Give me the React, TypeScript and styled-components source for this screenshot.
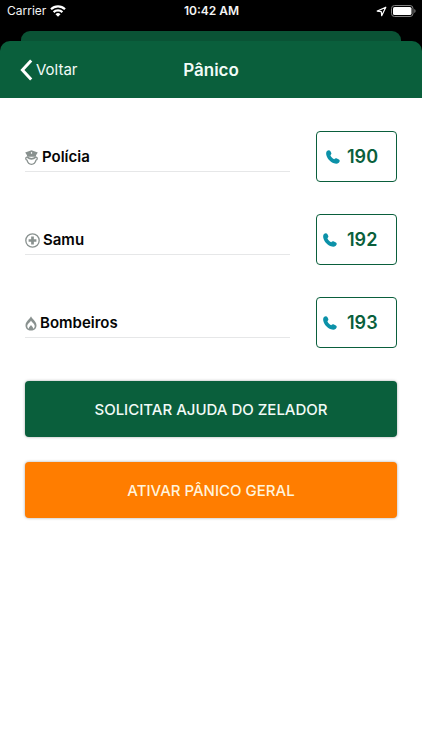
import React from 'react';
import styled, { createGlobalStyle } from 'styled-components';

const GREEN = '#0a5f3c';

const GlobalStyle = createGlobalStyle`
  * { box-sizing: border-box; }
  body {
    margin: 0;
    background: #fff;
    color: #050505;
    font-family: Inter, Roboto, "Liberation Sans", sans-serif;
  }
  button { font-family: inherit; cursor: pointer; }
`;

const Screen = styled.div`
  min-height: 100vh;
  background: #fff;
`;

const Top = styled.div`
  background: #000;
`;

const StatusBar = styled.div`
  display: grid;
  grid-template-columns: 1fr auto 1fr;
  align-items: center;
  height: 22px;
  padding: 0 6px 0 7px;
  color: #f4f4f4;
  font-size: 12px;
  line-height: 16px;
`;

const StatusGroup = styled.div<{ $end?: boolean }>`
  display: flex;
  align-items: center;
  gap: 4px;
  justify-content: ${({ $end }) => ($end ? 'flex-end' : 'flex-start')};
`;

const Clock = styled.time`
  font-weight: 600;
`;

const SheetBehind = styled.div`
  height: 10px;
  margin: 9px 21px 0;
  border-radius: 9px 9px 0 0;
  background: #0a5335;
`;

const Header = styled.header`
  display: grid;
  grid-template-columns: 1fr auto 1fr;
  align-items: center;
  height: 57px;
  padding: 0 20px;
  border-radius: 10px 10px 0 0;
  background: ${GREEN};
  color: #f2fbf7;
`;

const BackButton = styled.button`
  display: flex;
  align-items: center;
  justify-self: start;
  gap: 3px;
  padding: 0;
  border: 0;
  background: none;
  color: inherit;
  font-size: 15px;
  line-height: 24px;
`;

const Title = styled.h1`
  margin: 0;
  font-size: 17px;
  font-weight: 600;
  line-height: 24px;
`;

const Content = styled.main`
  padding: 33px 25px;
`;

const Contacts = styled.ul`
  display: flex;
  flex-direction: column;
  gap: 32px;
  margin: 0;
  padding: 0;
  list-style: none;
`;

const Contact = styled.li`
  display: flex;
  align-items: center;
  gap: 26px;
`;

const ContactName = styled.div<{ $gap: number }>`
  display: flex;
  flex: 1;
  align-items: center;
  gap: ${({ $gap }) => $gap}px;
  padding: 5px 0 3px;
  border-bottom: 1px solid #e6e7e8;
  font-size: 15px;
  font-weight: 600;
  line-height: 22px;
`;

const CallButton = styled.button<{ $wide?: boolean }>`
  display: flex;
  align-items: center;
  gap: ${({ $wide }) => ($wide ? 10 : 7)}px;
  width: 81px;
  height: 51px;
  padding: 0 0 0 ${({ $wide }) => ($wide ? 6 : 9)}px;
  border: 1px solid ${GREEN};
  border-radius: 4px;
  background: #fff;
  color: ${GREEN};
  font-size: 18px;
  font-weight: 600;
`;

const Actions = styled.div`
  display: flex;
  flex-direction: column;
  gap: 25px;
  margin-top: 33px;
`;

const ActionButton = styled.button<{ $color: string; $text: string }>`
  height: 56px;
  border: 0;
  border-radius: 4px;
  background: ${({ $color }) => $color};
  box-shadow: 0 0 3px rgba(0, 0, 0, 0.35);
  color: ${({ $text }) => $text};
  font-size: 15px;
  font-weight: 500;
`;

const WifiIcon = () => (
  <svg width="16" height="12" viewBox="0 0 16 12" fill="none" stroke="#fff" strokeWidth="2.2" aria-hidden="true">
    <path d="M1 4.3a10 10 0 0 1 14 0" />
    <path d="M3.6 7.1a6.3 6.3 0 0 1 8.8 0" />
    <path d="M8 11.7 5.5 9.2a3.5 3.5 0 0 1 5 0z" fill="#fff" stroke="none" />
  </svg>
);

const LocationIcon = () => (
  <svg width="11" height="11" viewBox="0 0 11 11" fill="none" stroke="#fff" strokeWidth="1.2" strokeLinejoin="round" aria-hidden="true">
    <path d="M9.8 1.2 1.2 5.1l4.1.6.4 4z" />
  </svg>
);

const BatteryIcon = () => (
  <svg width="25" height="12" viewBox="0 0 25 12" aria-hidden="true">
    <rect x=".5" y=".5" width="21.5" height="11" rx="3" fill="none" stroke="#828282" />
    <rect x="2" y="2" width="18.5" height="8" rx="1.6" fill="#fff" />
    <path d="M23.3 4a2.2 2.2 0 0 1 0 4z" fill="#828282" />
  </svg>
);

const ChevronIcon = () => (
  <svg width="13" height="22" viewBox="0 0 13 22" fill="none" stroke="#fff" strokeWidth="3" aria-hidden="true">
    <path d="M11.2 1.4 2.4 11l8.8 9.6" />
  </svg>
);

const PhoneIcon = () => (
  <svg width="14" height="14" viewBox="0 0 14 14" fill="#0b91a8" aria-hidden="true">
    <path d="M1 1.1C2.2-.2 3.7 0 4.3 1l.9 1.8c.5 1 .1 1.7-.8 2.5.6 1.6 2 3.1 3.8 4 .8-1 1.7-1.3 2.7-.8l2 1.1c1.1.7 1.1 2-.1 3.1-1.3 1.2-3 1.2-4.8.6C4.2 12 1.3 8.6.4 5.2-.1 3.4.1 2 1 1.1z" />
  </svg>
);

const PoliceIcon = () => (
  <svg width="13" height="15" viewBox="0 0 13 15" fill="none" stroke="#89918f" aria-hidden="true">
    <path d="M6.5.2 12.8 2.6 11 5.2v1.6H2V5.2L.2 2.6z" fill="#89918f" stroke="none" />
    <path d="m6.5 1.8.9 1.1-.9 1.2-.9-1.2z" fill="#fff" stroke="none" />
    <path d="M2 7.2C.3 7.2.4 9.800 2 10.200c.6 2.500 2.200 4.100 4.500 4.100s3.900-1.600 4.500-4.100c1.600-.4 1.700-3 0-3" strokeWidth="1.300" />
    <path d="M2.200 7.200c2.600 2 6 2 8.600 0" strokeWidth="1.600" />
  </svg>
);

const MedicalIcon = () => (
  <svg width="15" height="15" viewBox="0 0 15 15" fill="none" stroke="#89918f" aria-hidden="true">
    <circle cx="7.5" cy="7.5" r="6.7" strokeWidth="1.3" />
    <path d="M7.5 3.6v7.8M3.6 7.5h7.8" strokeWidth="2.7" />
  </svg>
);

const FlameIcon = () => (
  <svg width="12" height="15" viewBox="0 0 12 15" aria-hidden="true">
    <path
      fill="#89918f"
      fillRule="evenodd"
      d="M6 .3c.4 2.200 5.500 5 5.500 9.100 0 3-2.300 5.100-5.500 5.100S.5 12.400.5 9.400C.5 5.300 5.600 2.500 6 .3ZM6 4.600C5.400 6.400 2.300 7.600 2.300 10.200c0 1.100.6 2 1.600 2.500C3.800 11 5.100 10.300 6 9c.9 1.300 2.200 2 2.100 3.700 1-.5 1.600-1.400 1.600-2.500C9.700 7.600 6.600 6.400 6 4.600Z"
    />
  </svg>
);

const contacts = [
  { name: 'Polícia', phone: '190', icon: <PoliceIcon />, gap: 4, wide: false },
  { name: 'Samu', phone: '192', icon: <MedicalIcon />, gap: 3, wide: true },
  { name: 'Bombeiros', phone: '193', icon: <FlameIcon />, gap: 3, wide: true },
];

export default function App() {
  return (
    <Screen>
      <GlobalStyle />
      <Top>
        <StatusBar>
          <StatusGroup>
            <span>Carrier</span>
            <WifiIcon />
          </StatusGroup>
          <Clock>10:42 AM</Clock>
          <StatusGroup $end>
            <LocationIcon />
            <BatteryIcon />
          </StatusGroup>
        </StatusBar>
        <SheetBehind />
        <Header>
          <BackButton type="button">
            <ChevronIcon />
            Voltar
          </BackButton>
          <Title>Pânico</Title>
        </Header>
      </Top>
      <Content>
        <Contacts>
          {contacts.map(({ name, phone, icon, gap, wide }) => (
            <Contact key={phone}>
              <ContactName $gap={gap}>
                {icon}
                <span>{name}</span>
              </ContactName>
              <CallButton type="button" $wide={wide} aria-label={`${name} ${phone}`}>
                <PhoneIcon />
                {phone}
              </CallButton>
            </Contact>
          ))}
        </Contacts>
        <Actions>
          <ActionButton type="button" $color={GREEN} $text="#f2fbf7">
            SOLICITAR AJUDA DO ZELADOR
          </ActionButton>
          <ActionButton type="button" $color="#ff7d00" $text="#fff3dc">
            ATIVAR PÂNICO GERAL
          </ActionButton>
        </Actions>
      </Content>
    </Screen>
  );
}
